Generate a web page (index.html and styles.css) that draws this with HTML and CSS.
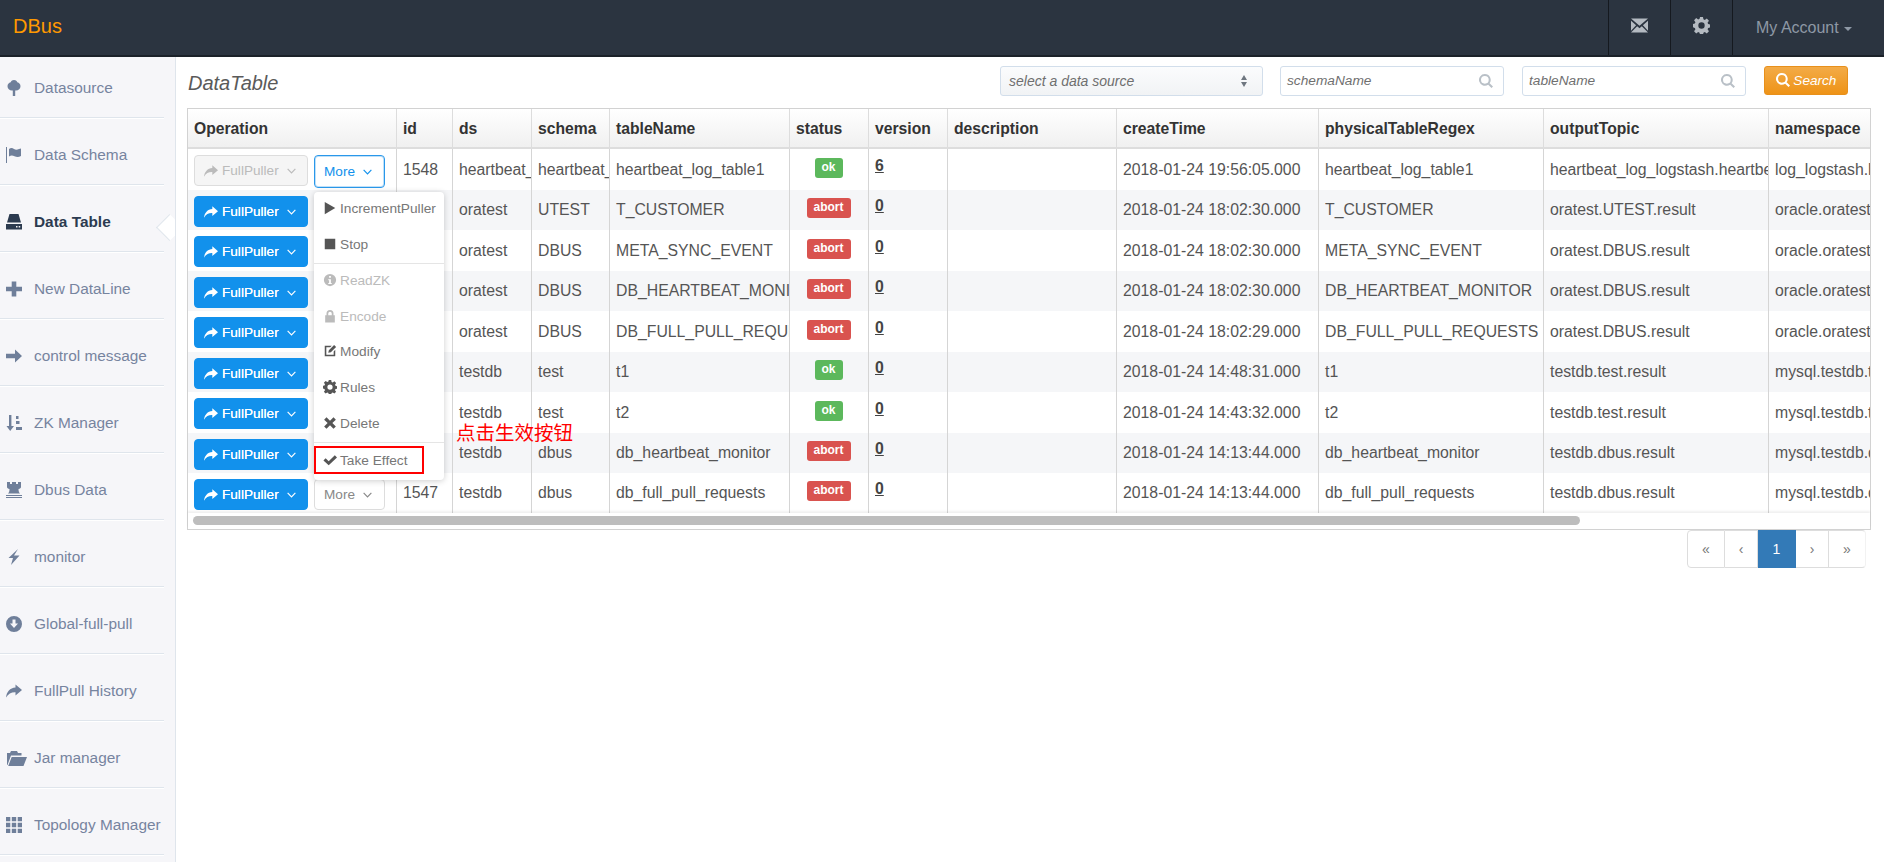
FILE: index.html
```html
<!DOCTYPE html>
<html>
<head>
  <meta charset="utf-8">
  <title>DBus</title>
  <link rel="stylesheet" href="styles.css">
</head>
<body>
  <svg class="icon-defs" xmlns="http://www.w3.org/2000/svg">
    <symbol id="i-share" viewBox="0 0 16 16"><path d="M9.5 1.5 16 7l-6.500 5.500V9.200C5.500 9 2.300 10.500 0 14.500 .6 9 4 4.900 9.500 4.600z"/></symbol>
    <symbol id="i-tree" viewBox="0 0 16 16"><path d="M8 0c2 0 3 1.200 3.300 2.300C13.200 2.700 14.500 4.300 14.500 6.300c0 2.500-2 4.300-4.500 4.300H9.200V16H6.800v-5.400H6C3.500 10.600 1.500 8.800 1.500 6.300c0-2 1.300-3.600 3.200-4C5 1.200 6 0 8 0z"/></symbol>
    <symbol id="i-flag" viewBox="0 0 16 16"><path d="M0 0h1v16H0zM3 2c2-1.500 3.500-1 5 0s3 1 5 0l2-.5V9c-2.500 1.500-4.500 1.200-6.500.2C6.500 8.200 5 8 3 9.500z"/></symbol>
    <symbol id="i-hdd" viewBox="0 0 16 16"><path d="M3.500 0h9L15 8.500H1zM0 10h16v5.500H0zM10 12v1.500h1.500V12zM12.700 12v1.500h1.500V12z" fill-rule="evenodd"/></symbol>
    <symbol id="i-plus" viewBox="0 0 16 16"><path d="M5.700 .5h4.600v5.200H16v4.600h-5.700v5.200H5.700v-5.200H0V5.700h5.700z"/></symbol>
    <symbol id="i-arrow" viewBox="0 0 16 16"><path d="M9 1.500 16 8l-7 6.500v-4.300H0V5.800h9z"/></symbol>
    <symbol id="i-sort" viewBox="0 0 16 16"><path d="M3 0h2.400v11H8l-3.800 5L.5 11H3zM10 1h2.500v3H10zM10 6h3.500v3H10zM10 12h6v3h-6z"/></symbol>
    <symbol id="i-tower" viewBox="0 0 16 16"><path d="M1 0h3v2h2V0h4v2h2V0h3v5c0 1-1 1.700-2.500 2 0 2 .5 3.500 1.500 4.500H2C3 10.500 3.500 9 3.500 7 2 6.700 1 6 1 5zM0 13h16v1H0zM0 15h16v1H0z"/></symbol>
    <symbol id="i-flash" viewBox="0 0 16 16"><path d="M12 0 8 6.500h5.500L5 16l2-7H2.500z"/></symbol>
    <symbol id="i-download" viewBox="0 0 16 16"><path fill-rule="evenodd" d="M8 0a8 8 0 1 1 0 16A8 8 0 0 1 8 0zM6.500 3.500v4H4L8 12l4-4.500H9.500v-4z"/></symbol>
    <symbol id="i-folder" viewBox="0 0 21 16"><path d="M1 3h3l1-2h6l1 2h3.500v2.500H5L1.500 15H1zM5.700 7H21l-3.500 9H2.200z"/></symbol>
    <symbol id="i-th" viewBox="0 0 16 16"><path d="M0 0h4.300v4.300H0zM5.800 0h4.400v4.300H5.800zM11.700 0H16v4.300h-4.300zM0 5.800h4.300v4.400H0zM5.800 5.800h4.400v4.400H5.800zM11.700 5.800H16v4.400h-4.300zM0 11.700h4.300V16H0zM5.800 11.700h4.400V16H5.800zM11.700 11.700H16V16h-4.300z"/></symbol>
    <symbol id="i-play" viewBox="0 0 16 16"><path d="M2 1l12 7-12 7z"/></symbol>
    <symbol id="i-stop" viewBox="0 0 16 16"><path d="M2 2h12v12H2z"/></symbol>
    <symbol id="i-info" viewBox="0 0 16 16"><path fill-rule="evenodd" d="M8 1a7 7 0 1 1 0 14A7 7 0 0 1 8 1zM7 3.500v2h2v-2zM6 7v1.300h1v3H6v1.200h4v-1.200H9V7z"/></symbol>
    <symbol id="i-lock" viewBox="0 0 16 16"><path fill-rule="evenodd" d="M4 7V5a4 4 0 0 1 8 0v2h1.500v8.500h-11V7zM6 7h4V5a2 2 0 0 0-4 0z"/></symbol>
    <symbol id="i-edit" viewBox="0 0 16 16"><path d="M2.500 2H10L8.200 3.800H3.800v8.400h8.400V8.500L14 6.700v6.800c0 .8-.7 .5-1.500 .5h-10C1 14 2 14.500 2 13.500v-11c0-.8-.3-.5.5-.5zM12.700 1 15 3.300 9 9.300l-3 .7.700-3z"/></symbol>
    <symbol id="i-cog" viewBox="0 0 16 16"><path fill-rule="evenodd" d="M6.600 0h2.800l.4 2.200 1.300.6 1.900-1.300 2 2-1.300 1.900.6 1.300 2.200.4v2.800l-2.200.4-.6 1.300 1.300 1.900-2 2-1.900-1.300-1.300.6-.4 2.200H6.600l-.4-2.200-1.300-.6-1.900 1.300-2-2 1.300-1.900-.6-1.300L-.5 9.400V6.600l2.200-.4.6-1.300L1 3l2-2 1.900 1.300 1.300-.6zM8 5a3 3 0 1 0 0 6 3 3 0 0 0 0-6z"/></symbol>
    <symbol id="i-remove" viewBox="0 0 16 16"><path d="M4 1.500 8 5.500l4-4 2.700 2.700-4 3.800 4 4-2.700 2.500-4-4-4 4-2.700-2.500 4-4-4-3.800z"/></symbol>
    <symbol id="i-ok" viewBox="0 0 16 16"><path d="M13.500 2.500 16 5 6.500 14 .5 8.500 3 6l3.500 3.300z"/></symbol>
    <symbol id="i-mail" viewBox="0 0 16 16"><path d="M0 1.500h16L8 8.300zM0 3.500l4.800 4.200L0 13zM16 3.500v9.500l-4.800-5.300zM5.800 8.600 8 10.500l2.200-1.900L16 14.500H0z"/></symbol>
    <symbol id="i-search" viewBox="0 0 16 16"><path fill-rule="evenodd" d="M6.700 0a6.700 6.700 0 0 1 5.400 10.600L16 14.300 14.300 16l-3.800-3.800A6.700 6.700 0 1 1 6.700 0zm0 2.300a4.400 4.400 0 1 0 0 8.800 4.400 4.400 0 0 0 0-8.800z"/></symbol>
    <symbol id="i-chev" viewBox="0 0 10 6"><path d="M.7 .7 5 5l4.300-4.300" fill="none" stroke="currentColor" stroke-width="1.300"/></symbol>
  </svg>

  <header class="topbar">
    <div class="brand">DBus</div>
    <div class="top-nav">
      <div class="top-cell"><svg class="top-icon"><use href="#i-mail"/></svg></div>
      <div class="top-cell"><svg class="top-icon"><use href="#i-cog"/></svg></div>
      <div class="top-cell account">My Account <span class="caret"></span></div>
    </div>
  </header>

  <div class="main">
    <nav class="sidebar">
      <a class="side-item"><svg class="side-icon"><use href="#i-tree"/></svg>Datasource</a>
      <a class="side-item"><svg class="side-icon"><use href="#i-flag"/></svg>Data Schema</a>
      <a class="side-item active"><svg class="side-icon"><use href="#i-hdd"/></svg>Data Table</a>
      <a class="side-item"><svg class="side-icon"><use href="#i-plus"/></svg>New DataLine</a>
      <a class="side-item"><svg class="side-icon"><use href="#i-arrow"/></svg>control message</a>
      <a class="side-item"><svg class="side-icon"><use href="#i-sort"/></svg>ZK Manager</a>
      <a class="side-item"><svg class="side-icon"><use href="#i-tower"/></svg>Dbus Data</a>
      <a class="side-item"><svg class="side-icon"><use href="#i-flash"/></svg>monitor</a>
      <a class="side-item"><svg class="side-icon"><use href="#i-download"/></svg>Global-full-pull</a>
      <a class="side-item"><svg class="side-icon"><use href="#i-share"/></svg>FullPull History</a>
      <a class="side-item"><svg class="side-icon wide"><use href="#i-folder"/></svg>Jar manager</a>
      <a class="side-item"><svg class="side-icon"><use href="#i-th"/></svg>Topology Manager</a>
    </nav>

    <section class="content">
      <div class="toolbar">
        <h2 class="page-title">DataTable</h2>
        <div class="filters">
          <div class="select-box">select a data source<span class="updown"></span></div>
          <div class="search-input">schemaName<svg class="input-icon"><use href="#i-search"/></svg></div>
          <div class="search-input">tableName<svg class="input-icon"><use href="#i-search"/></svg></div>
          <button class="btn-search"><svg class="search-icon"><use href="#i-search"/></svg> Search</button>
        </div>
      </div>

      <div class="table-wrap">
        <div class="table-scroll">
          <table class="data-table">
            <colgroup>
              <col class="c-op"><col class="c-id"><col class="c-ds"><col class="c-schema"><col class="c-name"><col class="c-status"><col class="c-version"><col class="c-desc"><col class="c-time"><col class="c-regex"><col class="c-topic"><col class="c-ns">
            </colgroup>
            <thead>
              <tr><th>Operation</th><th>id</th><th>ds</th><th>schema</th><th>tableName</th><th>status</th><th>version</th><th>description</th><th>createTime</th><th>physicalTableRegex</th><th>outputTopic</th><th>namespace</th></tr>
            </thead>
            <tbody>
              <tr>
                <td class="op"><div class="op-btns"><button class="btn-full disabled"><svg class="btn-icon"><use href="#i-share"/></svg>FullPuller<svg class="chev"><use href="#i-chev"/></svg></button><button class="btn-more focus">More<svg class="chev"><use href="#i-chev"/></svg></button></div></td>
                <td>1548</td><td>heartbeat_log_logstash</td><td>heartbeat_log_logstash</td><td>heartbeat_log_table1</td>
                <td class="st"><span class="badge ok">ok</span></td><td class="ver"><a>6</a></td><td></td>
                <td>2018-01-24 19:56:05.000</td><td>heartbeat_log_table1</td><td>heartbeat_log_logstash.heartbeat.result</td><td>log_logstash.heartbeat_log.table1</td>
              </tr>
              <tr>
                <td class="op"><div class="op-btns"><button class="btn-full"><svg class="btn-icon"><use href="#i-share"/></svg>FullPuller<svg class="chev"><use href="#i-chev"/></svg></button></div></td>
                <td>1546</td><td>oratest</td><td>UTEST</td><td>T_CUSTOMER</td>
                <td class="st"><span class="badge abort">abort</span></td><td class="ver"><a>0</a></td><td></td>
                <td>2018-01-24 18:02:30.000</td><td>T_CUSTOMER</td><td>oratest.UTEST.result</td><td>oracle.oratest.UTEST.T_CUSTOMER</td>
              </tr>
              <tr>
                <td class="op"><div class="op-btns"><button class="btn-full"><svg class="btn-icon"><use href="#i-share"/></svg>FullPuller<svg class="chev"><use href="#i-chev"/></svg></button></div></td>
                <td>1545</td><td>oratest</td><td>DBUS</td><td>META_SYNC_EVENT</td>
                <td class="st"><span class="badge abort">abort</span></td><td class="ver"><a>0</a></td><td></td>
                <td>2018-01-24 18:02:30.000</td><td>META_SYNC_EVENT</td><td>oratest.DBUS.result</td><td>oracle.oratest.DBUS.META_SYNC</td>
              </tr>
              <tr>
                <td class="op"><div class="op-btns"><button class="btn-full"><svg class="btn-icon"><use href="#i-share"/></svg>FullPuller<svg class="chev"><use href="#i-chev"/></svg></button></div></td>
                <td>1544</td><td>oratest</td><td>DBUS</td><td>DB_HEARTBEAT_MONITOR</td>
                <td class="st"><span class="badge abort">abort</span></td><td class="ver"><a>0</a></td><td></td>
                <td>2018-01-24 18:02:30.000</td><td>DB_HEARTBEAT_MONITOR</td><td>oratest.DBUS.result</td><td>oracle.oratest.DBUS.DB_HEART</td>
              </tr>
              <tr>
                <td class="op"><div class="op-btns"><button class="btn-full"><svg class="btn-icon"><use href="#i-share"/></svg>FullPuller<svg class="chev"><use href="#i-chev"/></svg></button></div></td>
                <td>1543</td><td>oratest</td><td>DBUS</td><td>DB_FULL_PULL_REQUESTS</td>
                <td class="st"><span class="badge abort">abort</span></td><td class="ver"><a>0</a></td><td></td>
                <td>2018-01-24 18:02:29.000</td><td>DB_FULL_PULL_REQUESTS</td><td>oratest.DBUS.result</td><td>oracle.oratest.DBUS.DB_FULL</td>
              </tr>
              <tr>
                <td class="op"><div class="op-btns"><button class="btn-full"><svg class="btn-icon"><use href="#i-share"/></svg>FullPuller<svg class="chev"><use href="#i-chev"/></svg></button></div></td>
                <td>1542</td><td>testdb</td><td>test</td><td>t1</td>
                <td class="st"><span class="badge ok">ok</span></td><td class="ver"><a>0</a></td><td></td>
                <td>2018-01-24 14:48:31.000</td><td>t1</td><td>testdb.test.result</td><td>mysql.testdb.test.t1.result</td>
              </tr>
              <tr>
                <td class="op"><div class="op-btns"><button class="btn-full"><svg class="btn-icon"><use href="#i-share"/></svg>FullPuller<svg class="chev"><use href="#i-chev"/></svg></button></div></td>
                <td>1541</td><td>testdb</td><td>test</td><td>t2</td>
                <td class="st"><span class="badge ok">ok</span></td><td class="ver"><a>0</a></td><td></td>
                <td>2018-01-24 14:43:32.000</td><td>t2</td><td>testdb.test.result</td><td>mysql.testdb.test.t2.result</td>
              </tr>
              <tr>
                <td class="op"><div class="op-btns"><button class="btn-full"><svg class="btn-icon"><use href="#i-share"/></svg>FullPuller<svg class="chev"><use href="#i-chev"/></svg></button></div></td>
                <td>1540</td><td>testdb</td><td>dbus</td><td>db_heartbeat_monitor</td>
                <td class="st"><span class="badge abort">abort</span></td><td class="ver"><a>0</a></td><td></td>
                <td>2018-01-24 14:13:44.000</td><td>db_heartbeat_monitor</td><td>testdb.dbus.result</td><td>mysql.testdb.dbus.db_heartbeat</td>
              </tr>
              <tr>
                <td class="op"><div class="op-btns"><button class="btn-full"><svg class="btn-icon"><use href="#i-share"/></svg>FullPuller<svg class="chev"><use href="#i-chev"/></svg></button><button class="btn-more">More<svg class="chev"><use href="#i-chev"/></svg></button></div></td>
                <td>1547</td><td>testdb</td><td>dbus</td><td>db_full_pull_requests</td>
                <td class="st"><span class="badge abort">abort</span></td><td class="ver"><a>0</a></td><td></td>
                <td>2018-01-24 14:13:44.000</td><td>db_full_pull_requests</td><td>testdb.dbus.result</td><td>mysql.testdb.dbus.db_full_pull</td>
              </tr>
            </tbody>
          </table>
        </div>
        <div class="scroll-track"><div class="scroll-thumb"></div></div>

        <div class="dropdown">
          <ul class="menu-group">
            <li><svg class="menu-icon"><use href="#i-play"/></svg>IncrementPuller</li>
            <li><svg class="menu-icon"><use href="#i-stop"/></svg>Stop</li>
          </ul>
          <ul class="menu-group">
            <li class="off"><svg class="menu-icon"><use href="#i-info"/></svg>ReadZK</li>
            <li class="off"><svg class="menu-icon"><use href="#i-lock"/></svg>Encode</li>
            <li><svg class="menu-icon"><use href="#i-edit"/></svg>Modify</li>
            <li><svg class="menu-icon"><use href="#i-cog"/></svg>Rules</li>
            <li><svg class="menu-icon"><use href="#i-remove"/></svg>Delete</li>
          </ul>
          <ul class="menu-group">
            <li class="take"><svg class="menu-icon"><use href="#i-ok"/></svg>Take Effect</li>
          </ul>
        </div>
        <div class="mark-box"></div>
        <div class="mark-note">点击生效按钮</div>
      </div>

      <div class="pager-row">
        <ul class="pager">
          <li>«</li><li>‹</li><li class="current">1</li><li>›</li><li>»</li>
        </ul>
      </div>
    </section>
  </div>
</body>
</html>
```

FILE: styles.css
```css
/* page */
html, body {
  height: 100%;
}
body {
  margin: 0;
  overflow: hidden;
  display: flex;
  flex-direction: column;
  font-family: "Liberation Sans", Arial, sans-serif;
  font-size: 14px;
  color: #555;
  background: #fff;
}
.icon-defs {
  display: none;
}
ul {
  list-style: none;
  margin: 0;
  padding: 0;
}

/* top bar */
.topbar {
  flex: none;
  height: 55px;
  display: flex;
  justify-content: space-between;
  background: #2b3440;
  border-bottom: 2px solid #1b2129;
}
.brand {
  padding: 15px 0 0 13px;
  font-size: 20px;
  line-height: 23px;
  color: #f90;
}
.top-nav {
  display: flex;
}
.top-cell {
  width: 61px;
  display: flex;
  align-items: center;
  justify-content: center;
  border-left: 1px solid #15191f;
}
.top-cell.account {
  width: 152px;
  justify-content: flex-start;
  padding-left: 23px;
  box-sizing: border-box;
  font-size: 16px;
  color: #8e98a5;
  gap: 5px;
}
.top-icon {
  width: 17px;
  height: 17px;
  margin-top: -5px;
  fill: #b4bac1;
}
.caret {
  width: 0;
  height: 0;
  margin-top: 2px;
  border-left: 4px solid transparent;
  border-right: 4px solid transparent;
  border-top: 4px solid #8e98a5;
}

/* layout */
.main {
  flex: 1;
  display: flex;
  min-height: 0;
}

/* sidebar */
.sidebar {
  width: 175px;
  flex: none;
  background: #f6f6f9;
  border-right: 1px solid #dfe5ec;
  overflow: hidden;
}
.side-item {
  position: relative;
  display: flex;
  align-items: center;
  height: 20px;
  padding: 27px 0 19px 6px;
  width: 158px;
  border-bottom: 1px solid #dfe5ec;
  box-shadow: 0 1px 0 #fff;
  font-size: 15.4px;
  line-height: 20px;
  color: #76849f;
  white-space: nowrap;
}
.side-item:first-child {
  padding-top: 21px;
}
.side-item.active {
  font-weight: bold;
  color: #2c3b50;
}
.side-item.active::after {
  content: "";
  position: absolute;
  left: 160px;
  top: 33px;
  width: 18px;
  height: 18px;
  background: #fff;
  border-left: 1px solid #dfe5ec;
  border-bottom: 1px solid #dfe5ec;
  transform: rotate(45deg);
  z-index: 1;
}
.side-icon {
  flex: none;
  width: 16px;
  height: 16px;
  margin-right: 12px;
  fill: #6f7f9a;
}
.side-icon.wide {
  width: 21px;
  margin-right: 7px;
}
.side-item.active .side-icon {
  fill: #2c3b50;
}

/* content head */
.content {
  flex: 1;
  min-width: 0;
  padding: 0 13px 0 11px;
  position: relative;
  z-index: 2;
}
.toolbar {
  height: 51px;
  display: flex;
  justify-content: space-between;
}
.page-title {
  margin: 15px 0 0 1px;
  font-size: 20px;
  line-height: 23px;
  font-weight: normal;
  font-style: italic;
  color: #5a5a5a;
}
.filters {
  display: flex;
  gap: 18px;
  padding: 9px 23px 0 0;
  align-items: flex-start;
}
.select-box,
.search-input {
  position: relative;
  height: 30px;
  box-sizing: border-box;
  padding-left: 8px;
  border: 1px solid #d2deeb;
  border-radius: 3px;
  line-height: 28px;
  font-style: italic;
  color: #6f6f6f;
}
.select-box {
  width: 263px;
  margin-right: -1px;
  background: linear-gradient(#fbfcfd, #f1f3f5);
}
.updown {
  position: absolute;
  right: 15px;
  top: 8px;
  width: 0;
  height: 0;
  border-left: 3.500px solid transparent;
  border-right: 3.500px solid transparent;
  border-bottom: 5px solid #6f7780;
}
.updown::after {
  content: "";
  position: absolute;
  left: -3.500px;
  top: 7px;
  border-left: 3.500px solid transparent;
  border-right: 3.500px solid transparent;
  border-top: 5px solid #6f7780;
}
.search-input {
  width: 224px;
  padding-left: 6px;
  background: #fff;
  font-size: 13.7px;
}
.input-icon {
  position: absolute;
  right: 10px;
  top: 7px;
  width: 14px;
  height: 14px;
  fill: #b9c0c7;
}
.btn-search {
  width: 84px;
  height: 29px;
  padding: 0;
  border: 1px solid #e8901b;
  border-radius: 3px;
  background: linear-gradient(#f3ab47, #ee9317);
  font-family: inherit;
  font-size: 13.600px;
  font-style: italic;
  color: #fff;
}
.search-icon {
  width: 14px;
  height: 14px;
  fill: #fff;
  vertical-align: -2px;
}

/* table */
.table-wrap {
  position: relative;
  border: 1px solid #d2d2d2;
}
.table-scroll {
  overflow: hidden;
}
.data-table {
  width: 1800px;
  table-layout: fixed;
  border-collapse: separate;
  border-spacing: 0;
}
.c-op { width: 208px; }
.c-id { width: 56px; }
.c-ds { width: 79px; }
.c-schema { width: 78px; }
.c-name { width: 180px; }
.c-status { width: 79px; }
.c-version { width: 79px; }
.c-desc { width: 169px; }
.c-time { width: 202px; }
.c-regex { width: 225px; }
.c-topic { width: 225px; }
.c-ns { width: 220px; }

.data-table th,
.data-table td {
  box-sizing: border-box;
  white-space: nowrap;
  overflow: hidden;
}
.data-table th {
  height: 40px;
  padding: 1px 0 0 6px;
  text-align: left;
  font-size: 15.7px;
  color: #333;
  background: linear-gradient(#fff, #f0f0f0);
  border-bottom: 2px solid #ddd;
  border-left: 1px solid #ddd;
}
.data-table th:first-child,
.data-table td:first-child {
  border-left: none;
}
.data-table td {
  padding: 0 1px 0 6px;
  font-size: 15.8px;
  color: #555;
  border-left: 1px solid #d5d5d5;
}
.data-table tbody tr:nth-child(odd) td {
  height: 41px;
}
.data-table tbody tr:nth-child(even) td {
  height: 40px;
  background: #f5f6f8;
}
.data-table tbody tr:last-child td {
  height: 40px;
}
.data-table td.op {
  padding: 6px 0 0 6px;
  vertical-align: top;
}
.op-btns {
  display: flex;
  gap: 6px;
}
.data-table td.st {
  padding: 0 1px 4px 0;
  text-align: center;
}
.data-table td.ver {
  padding-bottom: 8px;
}
.ver a {
  font-weight: bold;
  text-decoration: underline;
  color: #444;
}

/* buttons */
.btn-full,
.btn-more {
  height: 31px;
  box-sizing: border-box;
  display: flex;
  align-items: center;
  padding: 0 0 0 9px;
  border-radius: 4px;
  font-family: inherit;
  font-size: 13.600px;
}
.btn-full {
  width: 114px;
  border: 1px solid #1291ec;
  background: #1291ec;
  color: #fff;
  text-shadow: 0 0 0.5px #fff;
}
.btn-full.disabled {
  background: #f5f5f5;
  border-color: #ddd;
  color: #bbb;
  text-shadow: none;
}
.btn-icon {
  flex: none;
  width: 14px;
  height: 14px;
  margin-right: 4px;
  fill: currentColor;
}
.chev {
  flex: none;
  width: 9px;
  height: 6px;
  margin-left: 8px;
  color: inherit;
}
.btn-more {
  width: 71px;
  background: #fff;
  border: 1px solid #ddd;
  color: #888;
}
.btn-more.focus {
  height: 33px;
  border: 1px solid #2a98ea;
  box-shadow: 0 0 0 1px #bfe0f8 inset;
  color: #1291ec;
}

/* status labels */
.badge {
  display: inline-block;
  height: 20px;
  line-height: 19px;
  box-sizing: border-box;
  border-radius: 3px;
  font-size: 12px;
  font-weight: bold;
  color: #fff;
  vertical-align: middle;
}
.badge.ok {
  width: 28px;
  background: #5cb85c;
}
.badge.abort {
  width: 44px;
  background: #d9534f;
}

/* scrollbar */
.scroll-track {
  height: 16px;
  padding: 3px 0 0 5px;
  box-sizing: border-box;
  background: #fff;
  box-shadow: 0 -2px 2px rgba(0, 0, 0, 0.06);
  position: relative;
}
.scroll-thumb {
  width: 1387px;
  height: 9px;
  border-radius: 5px;
  background: #bdbdbd;
}

/* More menu */
.dropdown {
  position: absolute;
  left: 126px;
  top: 83px;
  width: 130px;
  height: 288px;
  background: #fff;
  border-radius: 4px;
  box-shadow: 0 1px 6px rgba(0, 0, 0, 0.2);
}
.menu-group {
  border-bottom: 1px solid #e5e5e5;
}
.menu-group:last-child {
  border-bottom: none;
}
.menu-group li {
  display: flex;
  align-items: flex-start;
  height: 35.600px;
  padding: 7px 0 0 9px;
  box-sizing: border-box;
  font-size: 13.700px;
  line-height: 20px;
  color: #777;
}
.menu-group li.off {
  color: #bbb;
}
.menu-group li.take {
  padding-top: 8px;
}
.menu-icon {
  flex: none;
  width: 14px;
  height: 14px;
  margin: 2px 3px 0 0;
  fill: #555;
}
.menu-group li.off .menu-icon {
  fill: #bbb;
}
.mark-box {
  position: absolute;
  left: 126px;
  top: 337px;
  width: 110px;
  height: 28px;
  box-sizing: border-box;
  border: 2px solid #f00;
}
.mark-note {
  position: absolute;
  left: 268px;
  top: 311px;
  font-family: "Noto Sans CJK SC", sans-serif;
  font-size: 19.500px;
  line-height: 24px;
  color: #f00;
  white-space: nowrap;
}

/* pagination */
.pager-row {
  display: flex;
  justify-content: flex-end;
  padding-right: 5px;
}
.pager {
  display: flex;
  height: 38px;
}
.pager li {
  box-sizing: border-box;
  width: 33px;
  border: 1px solid #ddd;
  border-left: none;
  text-align: center;
  line-height: 36px;
  color: #777;
}
.pager li:first-child {
  width: 38px;
  border-left: 1px solid #ddd;
  border-radius: 4px 0 0 4px;
}
.pager li:last-child {
  width: 37px;
  border-right-color: #f2f2f2;
  border-radius: 0 4px 4px 0;
}
.pager li.current {
  width: 38px;
  background: #337ab7;
  border-color: #337ab7;
  color: #fff;
}
```
